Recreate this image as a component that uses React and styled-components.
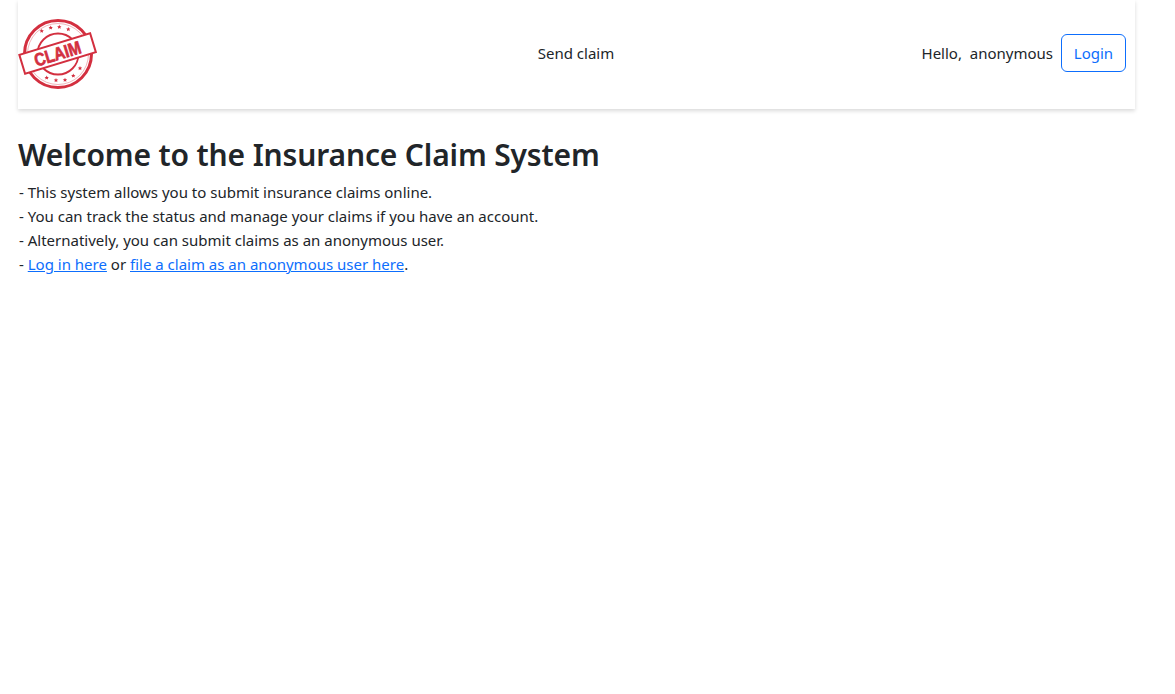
import React from "react";
import styled, { createGlobalStyle } from "styled-components";

const Global = createGlobalStyle`
  html, body { margin: 0; padding: 0; background: #fff; }
  body {
    font-family: "Noto Sans", "Liberation Sans", sans-serif;
    font-size: 16px;
    line-height: 24px;
    color: #212529;
  }
`;

const Page = styled.div`
  width: 1117px;
  margin-left: 18px;
`;

const Navbar = styled.nav`
  height: 109px;
  padding: 0 1px 4px 0;
  box-sizing: border-box;
  display: grid;
  grid-template-columns: 1fr auto 1fr;
  align-items: center;
  background: #fff;
  box-shadow: 0 2px 4px rgba(0, 0, 0, 0.15);
`;

const Brand = styled.a`
  display: flex;
  align-items: center;
`;

const Center = styled.a`
  font-size: 15px;
  color: #212529;
  text-decoration: none;
`;

const Right = styled.div`
  display: flex;
  justify-content: flex-end;
  align-items: center;
  gap: 8px;
  margin-right: 8px;
  font-size: 15px;
`;

const Greeting = styled.span`
  white-space: pre;
`;

const LoginButton = styled.button`
  width: 65px;
  height: 38px;
  padding: 0;
  font: inherit;
  color: #0d6efd;
  background: #fff;
  border: 1px solid #0d6efd;
  border-radius: 6px;
`;

const Main = styled.main`
  padding-top: 24px;
`;

const Title = styled.h1`
  margin: 0 0 3px;
  font-size: 30px;
  line-height: 44px;
  font-weight: 600;
  letter-spacing: -0.15px;
  color: #212529;
`;

const Line = styled.div`
  font-size: 15px;
  height: 24px;
  color: #212529;
  padding-left: 1px;
`;

const Link = styled.a`
  color: #0d6efd;
  text-decoration: underline;
`;

const RED = "#d32f3f";

const Star = ({ x, y }) => (
  <polygon
    transform={`translate(${x} ${y}) scale(2.3)`}
    points="0,-1 .29,-.31 .95,-.31 .47,.12 .59,.81 0,.45 -.59,.81 -.47,.12 -.95,-.31 -.29,-.31"
    fill={RED}
  />
);

const STARS = [
  [41.7, 31], [50.7, 27.7], [59.3, 27], [68.3, 29.3],
  [46.7, 77.7], [56, 80.3], [65, 80], [73.3, 75.7], [80, 68.3],
];

const ClaimLogo = () => (
  <svg width="80" height="75" viewBox="18 15 80 75">
    <circle cx="58" cy="54" r="33.5" fill="none" stroke={RED} strokeWidth="3" />
    <circle cx="58" cy="54" r="30.5" fill="none" stroke={RED} strokeOpacity="0.5" strokeWidth="0.7" />
    <circle cx="58" cy="54" r="20.5" fill="none" stroke={RED} strokeWidth="1.8" />
    {STARS.map(([x, y]) => (
      <Star key={`${x}-${y}`} x={x} y={y} />
    ))}
    <g transform="rotate(-17 57.6 53.5)">
      <rect x="20.6" y="43.7" width="74" height="19.6" fill="#fff" stroke={RED} strokeWidth="2" />
      <text
        x="57.6"
        y="60"
        textAnchor="middle"
        fontFamily="Liberation Sans, sans-serif"
        fontWeight="700"
        fontSize="18"
        textLength="48"
        lengthAdjust="spacingAndGlyphs"
        fill={RED}
        stroke={RED}
        strokeWidth="0.7"
      >
        CLAIM
      </text>
    </g>
  </svg>
);

export default function App() {
  return (
    <Page>
      <Global />
      <Navbar>
        <Brand>
          <ClaimLogo />
        </Brand>
        <Center>Send claim</Center>
        <Right>
          <Greeting>Hello,  anonymous</Greeting>
          <LoginButton>Login</LoginButton>
        </Right>
      </Navbar>
      <Main>
        <Title>Welcome to the Insurance Claim System</Title>
        <Line>- This system allows you to submit insurance claims online.</Line>
        <Line>- You can track the status and manage your claims if you have an account.</Line>
        <Line>- Alternatively, you can submit claims as an anonymous user.</Line>
        <Line>
          - <Link>Log in here</Link> or <Link>file a claim as an anonymous user here</Link>.
        </Line>
      </Main>
    </Page>
  );
}
